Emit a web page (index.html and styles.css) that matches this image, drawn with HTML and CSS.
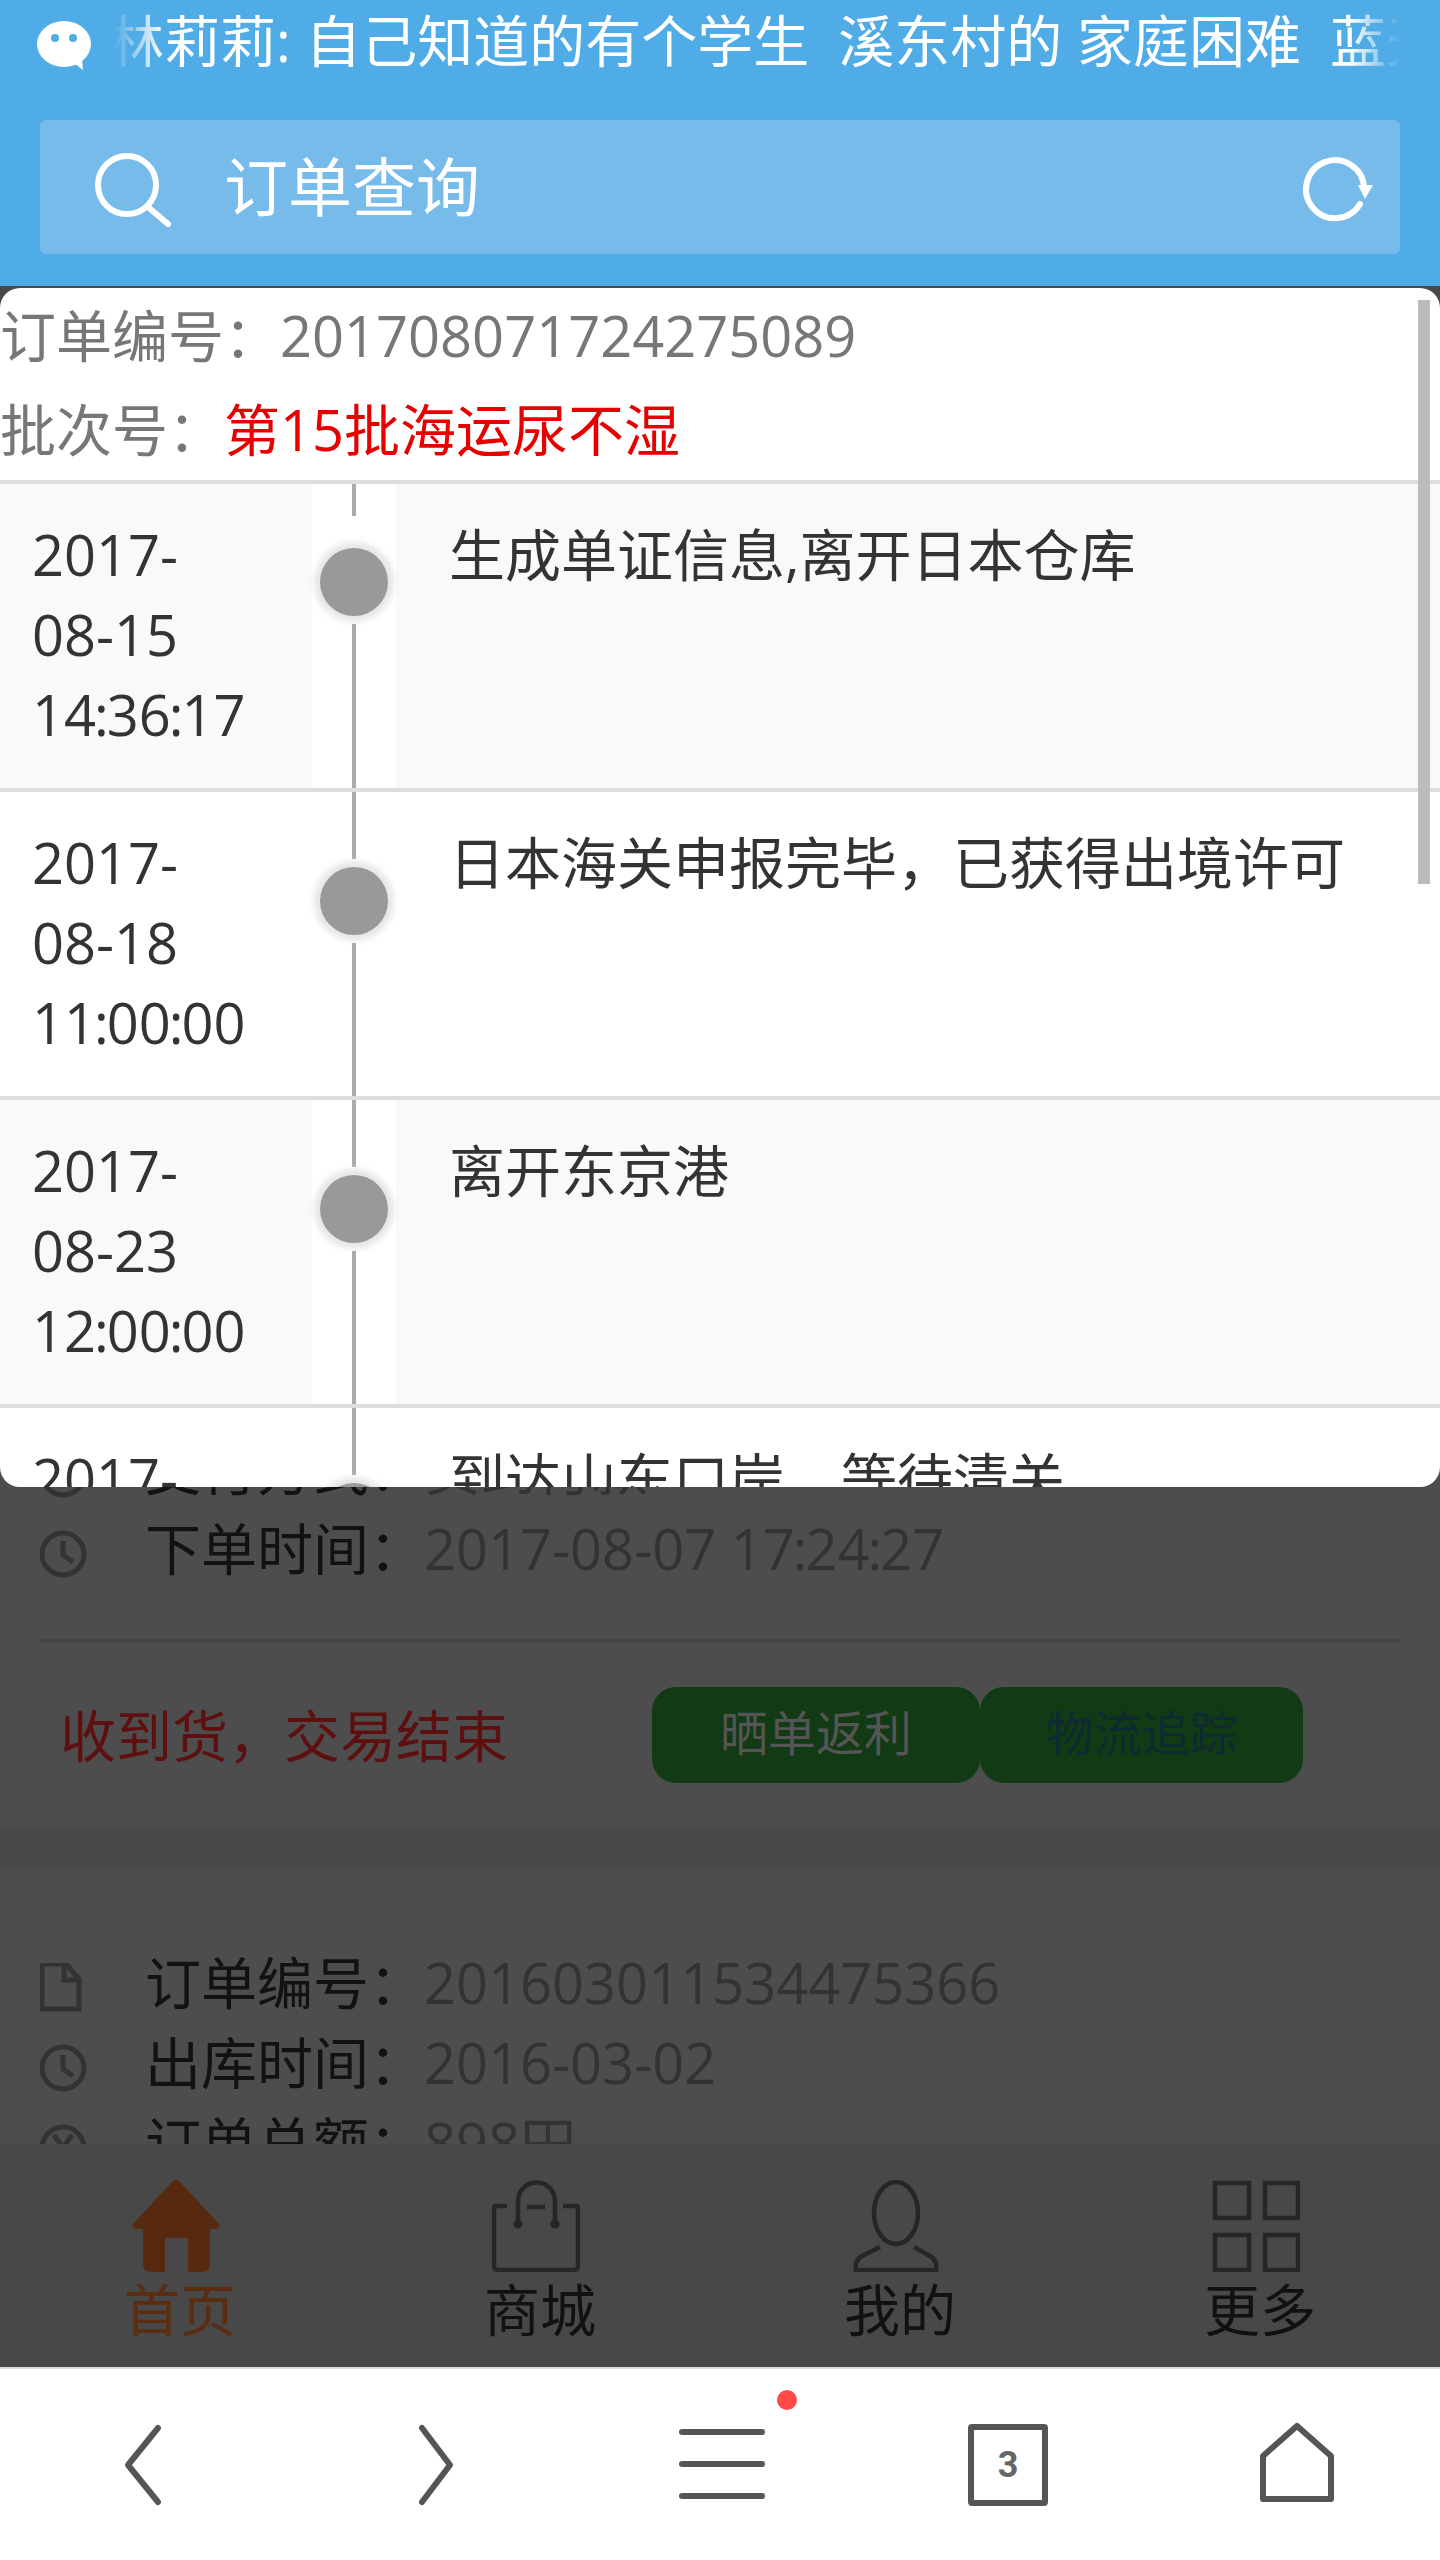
FILE: index.html
```html
<!DOCTYPE html>
<html lang="zh-CN">

<head>
    <meta charset="UTF-8">
    <title>订单查询</title>
    <link rel="stylesheet" href="styles.css">
</head>

<body>
    <div class="screen">
        <header class="top">
            <div class="notice">
                <svg class="chat-icon" viewBox="0 0 60 60">
                    <ellipse cx="28" cy="25" rx="27" ry="23" fill="#fff" />
                    <path d="M38 44 L47 51 L46 40 Z" fill="#fff" />
                    <circle cx="19" cy="19" r="4" fill="#50ace6" />
                    <circle cx="37" cy="19" r="4" fill="#50ace6" />
                </svg>
                <div class="notice-text">林莉莉: 自己知道的有个学生  溪东村的 家庭困难  蓝天</div>
            </div>
            <div class="search">
                <svg class="search-icon" viewBox="0 0 80 80">
                    <circle cx="35" cy="38" r="29" />
                    <path d="M56 60 L76 77" />
                </svg>
                <span class="search-text">订单查询</span>
                <svg class="refresh-icon" viewBox="0 0 80 80">
                    <path d="M62 57 A29 29 0 1 1 66 40" />
                    <polygon points="60,38 75,38 67,52" />
                </svg>
            </div>
        </header>

        <main class="page">
            <div class="orders">
                <section class="order">
                    <div class="info-row">
                        <svg class="info-icon" viewBox="0 0 50 50">
                            <circle cx="23" cy="25" r="21" />
                            <path d="M23 12 V26 L33 33" />
                        </svg>
                        <span class="info-label">支付方式：</span>
                        <span class="info-value">货到付款</span>
                    </div>
                    <div class="info-row">
                        <svg class="info-icon" viewBox="0 0 50 50">
                            <circle cx="23" cy="25" r="21" />
                            <path d="M23 12 V26 L33 33" />
                        </svg>
                        <span class="info-label">下单时间：</span>
                        <span class="info-value">2017-08-07 17<i class="tc">:</i>24<i class="tc">:</i>27</span>
                    </div>
                    <div class="order-foot">
                        <span class="order-status">收到货，交易结束</span>
                        <div class="order-btns">
                            <a class="btn">晒单返利</a>
                            <a class="btn btn-track">物流追踪</a>
                        </div>
                    </div>
                </section>

                <section class="order">
                    <div class="info-row">
                        <svg class="info-icon" viewBox="0 0 50 50">
                            <path d="M2 1 H26 L39 16 V46 H2 Z M24 1 V17 H39" />
                        </svg>
                        <span class="info-label">订单编号：</span>
                        <span class="info-value">201603011534475366</span>
                    </div>
                    <div class="info-row">
                        <svg class="info-icon" viewBox="0 0 50 50">
                            <circle cx="23" cy="25" r="21" />
                            <path d="M23 12 V26 L33 33" />
                        </svg>
                        <span class="info-label">出库时间：</span>
                        <span class="info-value">2016-03-02</span>
                    </div>
                    <div class="info-row">
                        <svg class="info-icon" viewBox="0 0 50 50">
                            <circle cx="23" cy="25" r="21" />
                            <path d="M14 12 L23 25 L32 12 M23 25 V38 M14 27 H32" />
                        </svg>
                        <span class="info-label">订单总额：</span>
                        <span class="info-value">898円</span>
                    </div>
                </section>
            </div>

            <nav class="tabbar">
                <a class="tab tab-active">
                    <svg class="tab-icon" viewBox="0 0 88 92">
                        <path class="solid" d="M44 0 Q46 0 48 2 L87 44 Q89 48 84 49 L78 49 V84 Q78 92 70 92 L56 92 V58 H33 V92 L20 92 Q11 92 11 84 V49 L4 49 Q-1 48 1 44 L40 2 Q42 0 44 0 Z" />
                    </svg>
                    <span>首页</span>
                </a>
                <a class="tab">
                    <svg class="tab-icon" viewBox="0 0 88 92">
                        <path d="M15 26 H4 Q2 26 2 28 V86 Q2 90 6 90 H82 Q86 90 86 86 V28 Q86 26 84 26 H71" />
                        <path d="M26 44 V22 C26 -4 63 -4 63 22 V44" />
                        <path d="M35 27 H53" />
                        <circle class="solid" cx="26" cy="44" r="4.5" />
                        <circle class="solid" cx="63" cy="44" r="4.5" />
                    </svg>
                    <span>商城</span>
                </a>
                <a class="tab">
                    <svg class="tab-icon" viewBox="0 0 88 92">
                        <ellipse cx="44" cy="33" rx="22" ry="31" />
                        <path d="M28 67 L10 76 Q2 81 4 90 H84 Q86 81 78 76 L62 67" />
                    </svg>
                    <span>我的</span>
                </a>
                <a class="tab">
                    <svg class="tab-icon" viewBox="0 0 88 92">
                        <rect x="3" y="3" width="34" height="35" />
                        <rect x="53" y="3" width="33" height="35" />
                        <rect x="3" y="55" width="34" height="35" />
                        <rect x="53" y="55" width="33" height="35" />
                    </svg>
                    <span>更多</span>
                </a>
            </nav>

            <!-- 物流弹窗 -->
            <div class="modal">
                <div class="modal-head">
                    <p>订单编号：201708071724275089</p>
                    <p>批次号：<span class="batch">第15批海运尿不湿</span></p>
                </div>

                <div class="track-row track-first">
                    <div class="track-date">2017-<br>08-15<br>14<i class="tc">:</i>36<i class="tc">:</i>17</div>
                    <div class="track-axis">
                        <i class="axis-top"></i>
                        <i class="axis-dot"></i>
                        <i class="axis-line"></i>
                    </div>
                    <div class="track-text">生成单证信息,离开日本仓库</div>
                </div>
                <div class="track-row">
                    <div class="track-date">2017-<br>08-18<br>11<i class="tc">:</i>00<i class="tc">:</i>00</div>
                    <div class="track-axis">
                        <i class="axis-top"></i>
                        <i class="axis-dot"></i>
                        <i class="axis-line"></i>
                    </div>
                    <div class="track-text">日本海关申报完毕，已获得出境许可</div>
                </div>
                <div class="track-row">
                    <div class="track-date">2017-<br>08-23<br>12<i class="tc">:</i>00<i class="tc">:</i>00</div>
                    <div class="track-axis">
                        <i class="axis-top"></i>
                        <i class="axis-dot"></i>
                        <i class="axis-line"></i>
                    </div>
                    <div class="track-text">离开东京港</div>
                </div>
                <div class="track-row">
                    <div class="track-date">2017-<br>08-28<br>09<i class="tc">:</i>00<i class="tc">:</i>00</div>
                    <div class="track-axis">
                        <i class="axis-top"></i>
                        <i class="axis-dot"></i>
                        <i class="axis-line"></i>
                    </div>
                    <div class="track-text">到达山东口岸，等待清关</div>
                </div>

                <div class="modal-scroll"></div>
            </div>
        </main>

        <footer class="toolbar">
            <a class="tool">
                <svg class="tool-icon" viewBox="0 0 90 90">
                    <path d="M59 8 L29 45 L59 82" />
                </svg>
            </a>
            <a class="tool">
                <svg class="tool-icon" viewBox="0 0 90 90">
                    <path d="M35 8 L63 45 L35 82" />
                </svg>
            </a>
            <a class="tool tool-menu">
                <svg class="tool-icon" viewBox="0 0 90 90">
                    <path d="M7 12 H87 M7 44 H87 M7 76 H87" />
                </svg>
                <i class="tool-dot"></i>
            </a>
            <a class="tool">
                <span class="tabs-count">3</span>
            </a>
            <a class="tool">
                <svg class="tool-icon" viewBox="0 0 90 90">
                    <path d="M46 6 L80 36 V79 H12 V36 Z" />
                </svg>
            </a>
        </footer>
    </div>
</body>

</html>
```

FILE: styles.css
```css
* {
    box-sizing: border-box;
}

body {
    margin: 0;
    font-family: "Open Sans", "Noto Sans CJK SC", sans-serif;
    font-size: 56px;
    line-height: 80px;
    background-color: #4d4d4d;
}

svg {
    display: block;
    flex-shrink: 0;
}

/* time colon is narrower in the original font */
.tc {
    font-style: normal;
    margin: 0 -2px;
}

.screen {
    width: 1440px;
    height: 2560px;
    display: flex;
    flex-direction: column;
    overflow: hidden;
}

/* top blue area */
.top {
    height: 286px;
    padding: 0 40px;
    background-color: #50ace6;
}

.notice {
    height: 80px;
    margin-bottom: 40px;
    display: flex;
    align-items: center;
}

.chat-icon {
    width: 60px;
    height: 60px;
    margin-left: -4px;
    margin-top: 18px;
    margin-right: 12px;
}

.notice-text {
    flex: 1;
    color: #fff;
    white-space: pre;
    overflow: hidden;
    -webkit-mask-image: linear-gradient(90deg, transparent 6px, #000 56px, #000 calc(100% - 50px), transparent 100%);
    mask-image: linear-gradient(90deg, transparent 6px, #000 56px, #000 calc(100% - 50px), transparent 100%);
}

.search {
    height: 134px;
    padding: 0 22px 0 52px;
    display: flex;
    align-items: center;
    background-color: #76bbea;
    border-radius: 6px;
    color: #fff;
}

.search-icon,
.refresh-icon {
    width: 80px;
    height: 80px;
    fill: none;
    stroke: #fff;
    stroke-width: 6;
    stroke-linecap: round;
}

.refresh-icon polygon {
    fill: #fff;
    stroke: none;
}

.search-text {
    flex: 1;
    margin-left: 52px;
    font-size: 64px;
}

/* dimmed page behind the popup */
.page {
    flex: 1;
    position: relative;
    display: flex;
    flex-direction: column;
    min-height: 0;
}

.orders {
    flex: 1;
    min-height: 0;
    overflow: hidden;
    padding-top: 1144px;
    background-color: #484848;
}

.order {
    background-color: #4d4d4d;
    margin-bottom: 41px;
    padding: 0 40px;
}

.order + .order {
    padding-top: 76px;
}

.info-row {
    display: flex;
    align-items: center;
    height: 80px;
    padding-bottom: 4px;
    white-space: nowrap;
}

.info-icon {
    width: 50px;
    height: 50px;
    margin-top: 12px;
    margin-right: 55px;
    fill: none;
    stroke: #333;
    stroke-width: 5;
}

.info-label {
    color: #121212;
    width: 279px;
    flex-shrink: 0;
}

.info-value {
    color: #333;
}

.order-foot {
    margin-top: 49px;
    height: 188px;
    border-top: 4px solid #444;
    display: flex;
    align-items: center;
}

.order-status {
    color: #5e0f0f;
    margin-left: 20px;
    width: 592px;
}

.order-btns {
    display: flex;
}

.btn {
    height: 96px;
    width: 328px;
    background-color: #123a14;
    border-radius: 24px;
    font-size: 48px;
    line-height: 92px;
    text-align: center;
    color: #555;
}

.btn-track {
    width: 323px;
    color: #0f2a30;
}

.tabbar {
    height: 223px;
    display: flex;
    background-color: #484848;
}

.tab {
    flex: 1;
    display: flex;
    flex-direction: column;
    align-items: center;
    padding-top: 36px;
    color: #111;
}

.tab-icon {
    width: 88px;
    height: 92px;
    margin-left: -8px;
    fill: none;
    stroke: #262626;
    stroke-width: 4.5;
}

.tab-icon .solid {
    fill: #262626;
    stroke: none;
}

.tab span {
    margin-top: -3px;
}

.tab-active {
    color: #5a2c10;
}

.tab-active .tab-icon .solid {
    fill: #57290f;
}

/* popup */
.modal {
    position: absolute;
    top: 2px;
    left: 0;
    right: 0;
    height: 1199px;
    background-color: #fff;
    border-radius: 20px;
    overflow: hidden;
    color: #333;
}

.modal-head {
    height: 196px;
    border-bottom: 4px solid #ddd;
    color: #777;
}

.modal-head p {
    margin: 0;
    height: 94px;
    line-height: 94px;
}

.batch {
    color: #e60000;
}

.track-row {
    display: grid;
    grid-template-columns: 312px 84px 1fr;
    height: 308px;
    border-bottom: 4px solid #ddd;
}

.track-row:nth-of-type(even) {
    background-color: #f9f9f9;
}

.track-date {
    padding: 30px 0 0 32px;
}

.track-text {
    padding: 30px 0 0 53px;
}

.track-axis {
    background-color: #fff;
    display: flex;
    flex-direction: column;
    align-items: center;
}

.axis-top {
    width: 4px;
    height: 67px;
    background-color: #aaa;
}

.axis-line {
    flex: 1;
    width: 4px;
    background-color: #aaa;
}

.axis-dot {
    width: 68px;
    height: 68px;
    margin: 8px 0;
    border-radius: 50%;
    background-color: #999;
    box-shadow: 0 0 6px 6px #e6e6e6;
}

.track-first .axis-top {
    height: 32px;
    margin-bottom: 24px;
}

.modal-scroll {
    position: absolute;
    top: 12px;
    right: 10px;
    width: 12px;
    height: 584px;
    background-color: #bbb;
}

/* browser toolbar */
.toolbar {
    height: 193px;
    display: flex;
    align-items: center;
    background-color: #fff;
    border-top: 2px solid #ddd;
}

.tool {
    position: relative;
    flex: 1;
    display: flex;
    justify-content: center;
}

.tool-icon {
    width: 90px;
    height: 90px;
    fill: none;
    stroke: #555;
    stroke-width: 6;
    stroke-linecap: round;
    stroke-linejoin: round;
}

.tool-dot {
    position: absolute;
    top: -30px;
    left: 201px;
    width: 20px;
    height: 20px;
    border-radius: 50%;
    background-color: #ff4a4a;
}

.tabs-count {
    width: 80px;
    height: 82px;
    border: 6px solid #555;
    border-radius: 4px;
    font-family: "Roboto", sans-serif;
    font-weight: bold;
    font-size: 36px;
    line-height: 70px;
    text-align: center;
    color: #666;
}
```
